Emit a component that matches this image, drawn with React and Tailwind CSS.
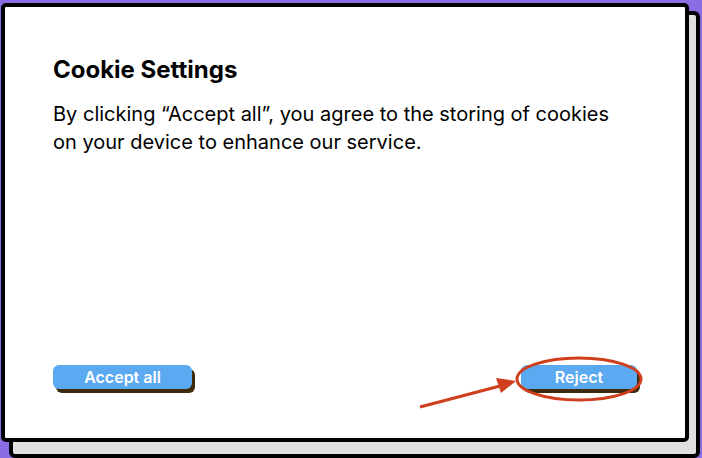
import React from "react";

export default function App() {
  return (
    <div className="w-[702px] h-[458px] bg-[#8a6ce3] overflow-hidden relative" style={{ fontFamily: "Inter, 'Liberation Sans', sans-serif" }}>
      <div className="absolute left-[9px] top-[11px] w-[691px] h-[447px] bg-[#e0e0e0] border-[4px] border-black rounded-[6px]" />
      <div className="absolute left-[1px] top-[3px] w-[688px] h-[439px] bg-white border-[4px] border-black rounded-[5px] flex flex-col justify-between px-[48px] pt-[47px] pb-[49px]">
        <div className="flex flex-col gap-[14px]">
          <h1 className="text-[24px] leading-[32px] font-bold text-black">Cookie Settings</h1>
          <p className="text-[20px] leading-[28px] text-black">
            By clicking “Accept all”, you agree to the storing of cookies
            <br />
            on your device to enhance our service.
          </p>
        </div>
        <div className="flex justify-between items-center">
          <button className="w-[139px] h-[24px] rounded-[6px] bg-[#5ba9f0] text-white text-[16px] font-semibold shadow-[3px_4px_0_#3d2b0c] flex items-center justify-center">Accept all</button>
          <button className="relative w-[116px] h-[24px] rounded-[6px] bg-[#5ba9f0] text-white text-[16px] font-semibold shadow-[3px_4px_0_#3d2b0c] flex items-center justify-center">
            Reject
          </button>
        </div>
      </div>
      <svg className="absolute left-0 top-0" width="702" height="458" viewBox="0 0 702 458">
        <ellipse cx="579" cy="379" rx="62" ry="21" fill="none" stroke="#cf3f1d" strokeWidth="3" />
        <line x1="420" y1="407" x2="500" y2="386" stroke="#cf3f1d" strokeWidth="3" />
        <polygon points="516,381 496,378 501,393" fill="#cf3f1d" />
      </svg>
    </div>
  );
}
